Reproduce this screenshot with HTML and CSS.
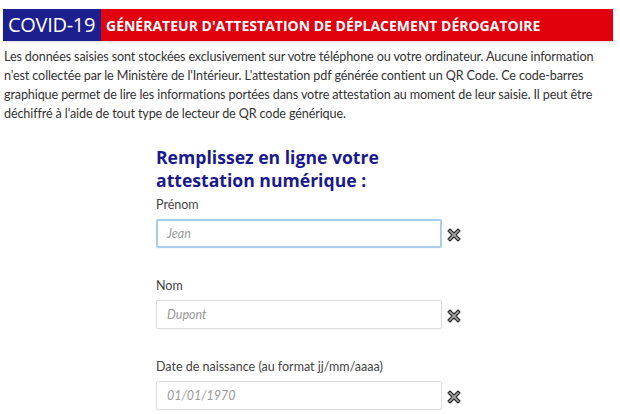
FILE: index.html
```html
<!DOCTYPE html>
<html lang="fr">
<head>
<meta charset="utf-8">
<link rel="stylesheet" href="styles.css">
</head>
<body>
<header class="banner">
  <div class="banner-covid">COVID-19</div>
  <div class="banner-title">GÉNÉRATEUR D'ATTESTATION DE DÉPLACEMENT DÉROGATOIRE</div>
</header>
<p class="intro">Les données saisies sont stockées exclusivement sur votre téléphone ou votre ordinateur. Aucune information n'est collectée par le Ministère de l'Intérieur. L'attestation pdf générée contient un QR Code. Ce code-barres graphique permet de lire les informations portées dans votre attestation au moment de leur saisie. Il peut être déchiffré à l'aide de tout type de lecteur de QR code générique.</p>
<main class="form">
  <h2 class="form-title">Remplissez en ligne votre attestation numérique :</h2>
  <div class="field">
    <label class="field-label">Prénom</label>
    <div class="field-row">
      <input class="field-input is-focused" type="text" placeholder="Jean">
      <svg class="clear" viewBox="0 0 14 14" width="14" height="14"><path d="M3 1 L7 5 L11 1 L13 3 L9 7 L13 11 L11 13 L7 9 L3 13 L1 11 L5 7 L1 3 Z" fill="#a8a8a8" stroke="#2b2b2b" stroke-width="1.1" stroke-linejoin="round"/></svg>
    </div>
  </div>
  <div class="field">
    <label class="field-label">Nom</label>
    <div class="field-row">
      <input class="field-input" type="text" placeholder="Dupont">
      <svg class="clear" viewBox="0 0 14 14" width="14" height="14"><path d="M3 1 L7 5 L11 1 L13 3 L9 7 L13 11 L11 13 L7 9 L3 13 L1 11 L5 7 L1 3 Z" fill="#a8a8a8" stroke="#2b2b2b" stroke-width="1.1" stroke-linejoin="round"/></svg>
    </div>
  </div>
  <div class="field">
    <label class="field-label">Date de naissance (au format jj/mm/aaaa)</label>
    <div class="field-row">
      <input class="field-input" type="text" placeholder="01/01/1970">
      <svg class="clear" viewBox="0 0 14 14" width="14" height="14"><path d="M3 1 L7 5 L11 1 L13 3 L9 7 L13 11 L11 13 L7 9 L3 13 L1 11 L5 7 L1 3 Z" fill="#a8a8a8" stroke="#2b2b2b" stroke-width="1.1" stroke-linejoin="round"/></svg>
    </div>
  </div>
</main>
</body>
</html>
```
FILE: styles.css
```css
html, body {
  margin: 0;
  padding: 0;
  background: #ffffff;
}
body {
  font-family: "Lato", "Open Sans", sans-serif;
  color: #333;
  overflow: hidden;
}
.banner {
  display: flex;
  height: 32px;
  margin: 9px 7px 0 3px;
  box-shadow: 0 1px 2px rgba(0,0,0,0.15);
}
.banner-covid {
  background: #1e1f8f;
  color: #fff;
  font-family: "Open Sans", sans-serif;
  font-size: 20px;
  line-height: 32px;
  width: 98px;
  padding-left: 5px;
  box-sizing: border-box;
  letter-spacing: -0.3px;
}
.banner-title {
  flex: 1;
  background: #e2000f;
  color: #fff;
  font-family: "Liberation Sans Narrow", "Open Sans", sans-serif;
  font-weight: 700;
  font-size: 14px;
  line-height: 33px;
  padding-left: 5px;
}
.intro {
  margin: 6px 0 0 0;
  padding: 0 0 0 4px;
  width: 602px;
  font-size: 12.6px;
  letter-spacing: -0.12px;
  line-height: 19px;
  color: #333;
}
.form {
  margin: 23px 0 0 156px;
  width: 320px;
}
.form-title {
  margin: 0;
  font-family: "Open Sans", sans-serif;
  font-weight: 700;
  font-size: 17.6px;
  line-height: 23px;
  color: #1a1a8c;
}
.field {
  display: flex;
  flex-direction: column;
  margin-top: 5px;
}
.field + .field {
  margin-top: 30px;
}
.field-label {
  font-size: 12.5px;
  line-height: 16px;
  color: #444;
  margin-bottom: 6px;
}
.field-row {
  display: flex;
  align-items: center;
  gap: 5px;
}
.field-input {
  width: 286px;
  height: 29px;
  box-sizing: border-box;
  border: 1px solid #dedede;
  border-radius: 2px;
  padding: 0 10px;
  font-family: "Lato", "Open Sans", sans-serif;
  font-size: 12.5px;
  box-shadow: 0 1px 1px rgba(0,0,0,0.04);
}
.field-input::placeholder {
  font-style: italic;
  color: #9a9a9a;
}
.field-input.is-focused {
  border: 2px solid #a9cdea;
  padding-left: 9px;
}
.clear {
  display: block;
  width: 14px;
  height: 14px;
  margin-top: 2px;
}
```
